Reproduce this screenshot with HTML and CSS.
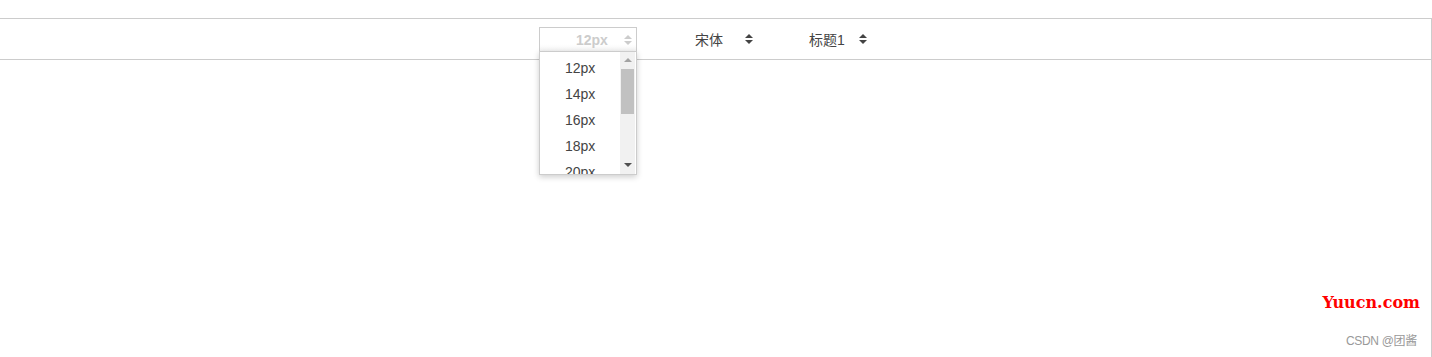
FILE: index.html
```html
<!DOCTYPE html>
<html lang="zh-CN">
<head>
    <meta charset="UTF-8">
    <title>Editor toolbar</title>
    <link rel="stylesheet" href="styles.css">
</head>
<body>
    <div class="editor">
        <div class="toolbar">
            <div class="picker size-picker">
                <span class="picker-label">12px</span>
                <span class="arrows light"></span>
                <div class="picker-options">
                    <ul class="option-list">
                        <li>12px</li>
                        <li>14px</li>
                        <li>16px</li>
                        <li>18px</li>
                        <li>20px</li>
                    </ul>
                    <div class="scrollbar">
                        <span class="scroll-up"></span>
                        <span class="scroll-thumb"></span>
                        <span class="scroll-down"></span>
                    </div>
                </div>
            </div>
            <div class="picker font-picker">
                <span class="picker-label">宋体</span>
                <span class="arrows"></span>
            </div>
            <div class="picker header-picker">
                <span class="picker-label">标题1</span>
                <span class="arrows"></span>
            </div>
        </div>
        <div class="editor-body"></div>
    </div>

    <div class="watermark">
        <div class="site">Yuucn.com</div>
        <div class="author">CSDN @团酱</div>
    </div>
</body>
</html>
```

FILE: styles.css
```css
html, body {
    margin: 0;
    padding: 0;
    height: 100%;
    overflow: hidden;
}

body {
    font-family: 'Liberation Sans', 'Noto Sans CJK SC', Arial, sans-serif;
    font-size: 14px;
    color: #333;
    background: #fff;
    position: relative;
}

.editor {
    margin: 18px 0 0 -1px;
    height: calc(100% - 18px);
    border-top: 1px solid #ccc;
    border-right: 1px solid #ccc;
    box-sizing: border-box;
}

.toolbar {
    display: flex;
    align-items: center;
    height: 40px;
    padding-left: 540px;
    border-bottom: 1px solid #ccc;
    position: relative;
}

.picker {
    position: relative;
    display: flex;
    align-items: center;
    height: 24px;
    box-sizing: border-box;
}

.picker .arrows {
    position: absolute;
    right: 8px;
    top: 50%;
    width: 8px;
    height: 10px;
    margin-top: -5px;
}

.arrows::before,
.arrows::after {
    content: '';
    position: absolute;
    left: 0;
    border-left: 4px solid transparent;
    border-right: 4px solid transparent;
}

.arrows::before {
    top: 0;
    border-bottom: 4px solid #444;
}

.arrows::after {
    bottom: 0;
    border-top: 4px solid #444;
}

.arrows.light::before {
    border-bottom-color: #ccc;
}

.arrows.light::after {
    border-top-color: #ccc;
}

.size-picker {
    width: 98px;
    border: 1px solid #ccc;
    border-bottom: none;
    background: linear-gradient(#fff 70%, #f4f4f4);
}

.size-picker .picker-label {
    color: #ccc;
    font-weight: bold;
    margin-left: 36px;
}

.size-picker .arrows {
    right: 4px;
}

.font-picker {
    width: 66px;
    margin-left: 58px;
}

.font-picker .picker-label,
.header-picker .picker-label {
    color: #444;
}

.header-picker {
    width: 66px;
    margin-left: 48px;
}

.picker-options {
    position: absolute;
    left: -1px;
    top: 23px;
    width: 96px;
    height: 122px;
    border: 1px solid #ccc;
    background: #fff;
    box-shadow: 0 2px 6px rgba(0, 0, 0, 0.2);
    display: flex;
    overflow: hidden;
    z-index: 2;
}

.option-list {
    list-style: none;
    margin: 0;
    padding: 3px 0 0 25px;
    flex: 1;
}

.option-list li {
    height: 26px;
    line-height: 26px;
    color: #444;
}

.scrollbar {
    position: relative;
    width: 15px;
    margin-right: 1px;
    background: #f1f1f1;
}

.scroll-up,
.scroll-down {
    position: absolute;
    left: 4px;
    border-left: 4px solid transparent;
    border-right: 4px solid transparent;
}

.scroll-up {
    top: 6px;
    border-bottom: 4px solid #a3a3a3;
}

.scroll-down {
    bottom: 7px;
    border-top: 4px solid #505050;
}

.scroll-thumb {
    position: absolute;
    left: 1px;
    right: 1px;
    top: 17px;
    height: 45px;
    background: #c1c1c1;
}

.watermark {
    position: absolute;
    right: 12px;
    bottom: 9px;
    text-align: right;
}

.site {
    font-family: 'DejaVu Serif', 'Liberation Serif', serif;
    font-size: 16px;
    font-weight: bold;
    color: #f00;
}

.author {
    margin-top: 19px;
    margin-right: 3px;
    font-size: 12px;
    letter-spacing: -0.3px;
    color: #999;
}
```
